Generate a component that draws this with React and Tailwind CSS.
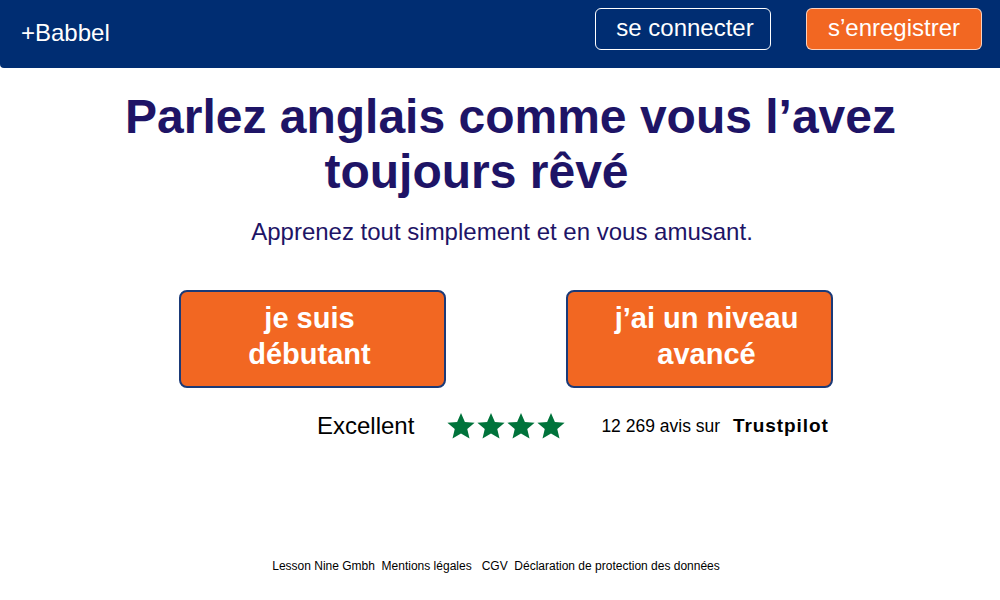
const Star = () => (
  <svg viewBox="0 0 24 24" className="w-[30px] h-[30px]" fill="#00733b">
    <path d="M12 1.5l3.1 7.2 7.8.6-5.9 5.1 1.8 7.6L12 18l-6.8 4 1.8-7.6-5.9-5.1 7.8-.6z" />
  </svg>
);

export default function App() {
  return (
    <div className="w-[1000px] h-[600px] bg-white font-['Liberation_Sans',Arial,sans-serif] flex flex-col">
      {/* header */}
      <header className="h-[68px] bg-[#002d72] rounded-bl-[4px] flex items-start justify-between pl-[21px] pr-[18px]">
        <div className="mt-[19px] text-[24px] leading-[28px] text-white">+Babbel</div>
        <div className="flex gap-[35px] mt-[8px]">
          <button className="w-[176px] h-[42px] border border-white rounded-[6px] text-white text-[24px] leading-none pb-[2px] pl-[4px]">
            se connecter
          </button>
          <button className="w-[176px] h-[42px] border border-white/70 bg-[#f26722] rounded-[6px] text-white text-[24px] leading-none pb-[2px]">
            s’enregistrer
          </button>
        </div>
      </header>

      {/* hero */}
      <main className="flex flex-col">
        <h1 className="mt-[21px] pl-[21px] text-[48px] leading-[55px] font-bold text-[#1e1466] text-center">
          <span className="block">Parlez anglais comme vous l’avez</span>
          <span className="block pr-[68px]">toujours rêvé</span>
        </h1>
        <p className="mt-[19px] text-[24px] leading-[28px] text-[#1e1466] text-center pl-[4px]">
          Apprenez tout simplement et en vous amusant.
        </p>

        <div className="mt-[44px] flex gap-[120px] pl-[179px]">
          <button className="w-[267px] h-[98px] bg-[#f26722] border-2 border-[#1b3a78] rounded-[8px] text-white font-bold text-[29px] leading-[36px] pr-[6px] pb-[6px]">
            je suis
            <br />
            débutant
          </button>
          <button className="w-[267px] h-[98px] bg-[#f26722] border-2 border-[#1b3a78] rounded-[8px] text-white font-bold text-[29px] leading-[36px] pl-[14px] pb-[6px]">
            j’ai un niveau
            <br />
            avancé
          </button>
        </div>

        <div className="mt-[20px] flex items-center pl-[317px]">
          <span className="text-[24px] text-black">Excellent</span>
          <div className="ml-[32px] flex gap-[0px]">
            <Star />
            <Star />
            <Star />
            <Star />
          </div>
          <span className="ml-[35px] text-[17.5px] text-black">12 269 avis sur</span>
          <span className="ml-[13px] text-[19px] tracking-[0.9px] font-bold text-black">Trustpilot</span>
        </div>
      </main>

      <footer className="mt-auto mb-[25px] text-center text-[12px] text-black pr-[8px]">
        Lesson Nine Gmbh&nbsp;&nbsp;Mentions légales&nbsp;&nbsp;&nbsp;CGV&nbsp;&nbsp;Déclaration de protection des données
      </footer>
    </div>
  );
}
